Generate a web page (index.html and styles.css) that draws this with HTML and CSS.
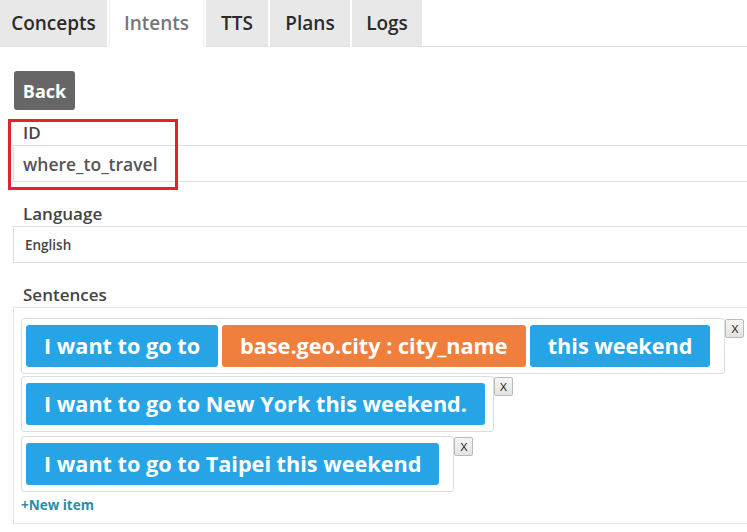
FILE: index.html
```html
<!DOCTYPE html>
<html>
<head>
<meta charset="utf-8">
<link rel="stylesheet" href="styles.css">
</head>
<body>
<nav class="tabs">
  <div class="tab">Concepts</div>
  <div class="tab active">Intents</div>
  <div class="tab">TTS</div>
  <div class="tab">Plans</div>
  <div class="tab">Logs</div>
  <div class="tab-fill"></div>
</nav>
<main class="content">
  <button class="back">Back</button>
  <div class="field field-id">
    <label class="label">ID</label>
    <div class="input input-id">where_to_travel</div>
    <div class="highlight"></div>
  </div>
  <div class="field">
    <label class="label">Language</label>
    <div class="input input-lang">English</div>
  </div>
  <div class="field">
    <label class="label">Sentences</label>
    <div class="sentences">
      <div class="row">
        <div class="sentence wide">
          <span class="chip">I want to go to</span><span class="chip orange">base.geo.city : city_name</span><span class="chip">this weekend</span>
        </div>
        <button class="remove">X</button>
      </div>
      <div class="row row-gap">
        <div class="sentence">
          <span class="chip">I want to go to New York this weekend.</span>
        </div>
        <button class="remove">X</button>
      </div>
      <div class="row">
        <div class="sentence wide">
          <span class="chip">I want to go to Taipei this weekend</span>
        </div>
        <button class="remove">X</button>
      </div>
      <a class="new-item">+New item</a>
    </div>
  </div>
</main>
</body>
</html>
```
FILE: styles.css
```css
html, body {
  margin: 0;
  padding: 0;
  overflow: hidden;
  background: #fff;
}
body {
  font-family: "Open Sans", "Liberation Sans", sans-serif;
  width: 747px;
  height: 532px;
}
.tabs {
  display: flex;
  gap: 2px;
  height: 47px;
}
.tab {
  background: #e8e8e8;
  color: #2b2b2b;
  font-size: 19px;
  font-weight: 600;
  display: flex;
  align-items: center;
  justify-content: center;
  padding: 0 10px;
  border-bottom: 1px solid #ddd;
}
.tab:nth-child(1) { width: 87px; }
.tab:nth-child(2) { width: 73px; }
.tab:nth-child(3) { width: 42px; }
.tab:nth-child(4) { width: 60px; }
.tab:nth-child(5) { width: 50px; }
.tab.active {
  background: #fff;
  color: #777;
  border-left: 1px solid #eee;
  border-right: 1px solid #eee;
  border-bottom-color: #fff;
}
.tab-fill {
  flex: 1;
  border-bottom: 1px solid #ddd;
  margin-left: -2px;
}
.content {
  padding: 24px 0 0 13px;
  width: 760px;
}
.back {
  display: block;
  margin-left: 1px;
  background: #666;
  color: #fff;
  border: 0;
  border-radius: 3px;
  font-family: inherit;
  font-size: 18px;
  font-weight: 700;
  width: 61px;
  height: 39px;
  padding: 0;
}
.field {
  position: relative;
}
.field-id {
  margin-top: 9px;
}
.label {
  display: block;
  padding: 2px 0 0 10px;
  font-size: 17px;
  font-weight: 600;
  color: #444;
  line-height: 24px;
}
.input {
  border: 1px solid #ddd;
  box-sizing: border-box;
  height: 37px;
  display: flex;
  align-items: center;
  padding-left: 9px;
  color: #555;
  font-weight: 600;
}
.input-id {
  font-size: 17.5px;
}
.input-lang {
  font-size: 13.5px;
  color: #444;
  padding-left: 11px;
}
.field + .field {
  margin-top: 18px;
}
.highlight {
  position: absolute;
  left: -5px;
  top: 0;
  width: 164px;
  height: 65px;
  border: 3px solid #e3222b;
}
.sentences {
  border: 1px solid #e4e4e4;
  padding: 10px 7px 11px;
  height: 217px;
  box-sizing: border-box;
}
.row {
  display: flex;
  align-items: flex-start;
  margin-bottom: 2px;
}
.row-gap {
  margin-bottom: 4px;
}
.sentence {
  border: 1px solid #ddd;
  border-radius: 3px;
  padding: 6px 8px 6px 4px;
  display: flex;
  gap: 4px;
}
.sentence.wide {
  padding-right: 14px;
}
.chip {
  background: #27a4e6;
  color: #fff;
  font-size: 21.65px;
  font-weight: 700;
  height: 42px;
  line-height: 42px;
  padding: 0 18px;
  border-radius: 3px;
  white-space: nowrap;
}
.chip.orange {
  background: #f07e3c;
}
.remove {
  margin-top: 1px;
  width: 19px;
  height: 19px;
  padding: 0;
  border: 1px solid #bbb;
  border-radius: 2px;
  background: linear-gradient(#f6f6f6, #e2e2e2);
  font-family: "Liberation Sans", sans-serif;
  font-size: 11px;
  color: #222;
}
.new-item {
  display: block;
  margin-top: 4px;
  color: #2a8ea5;
  font-size: 13.5px;
  font-weight: 700;
}
```
